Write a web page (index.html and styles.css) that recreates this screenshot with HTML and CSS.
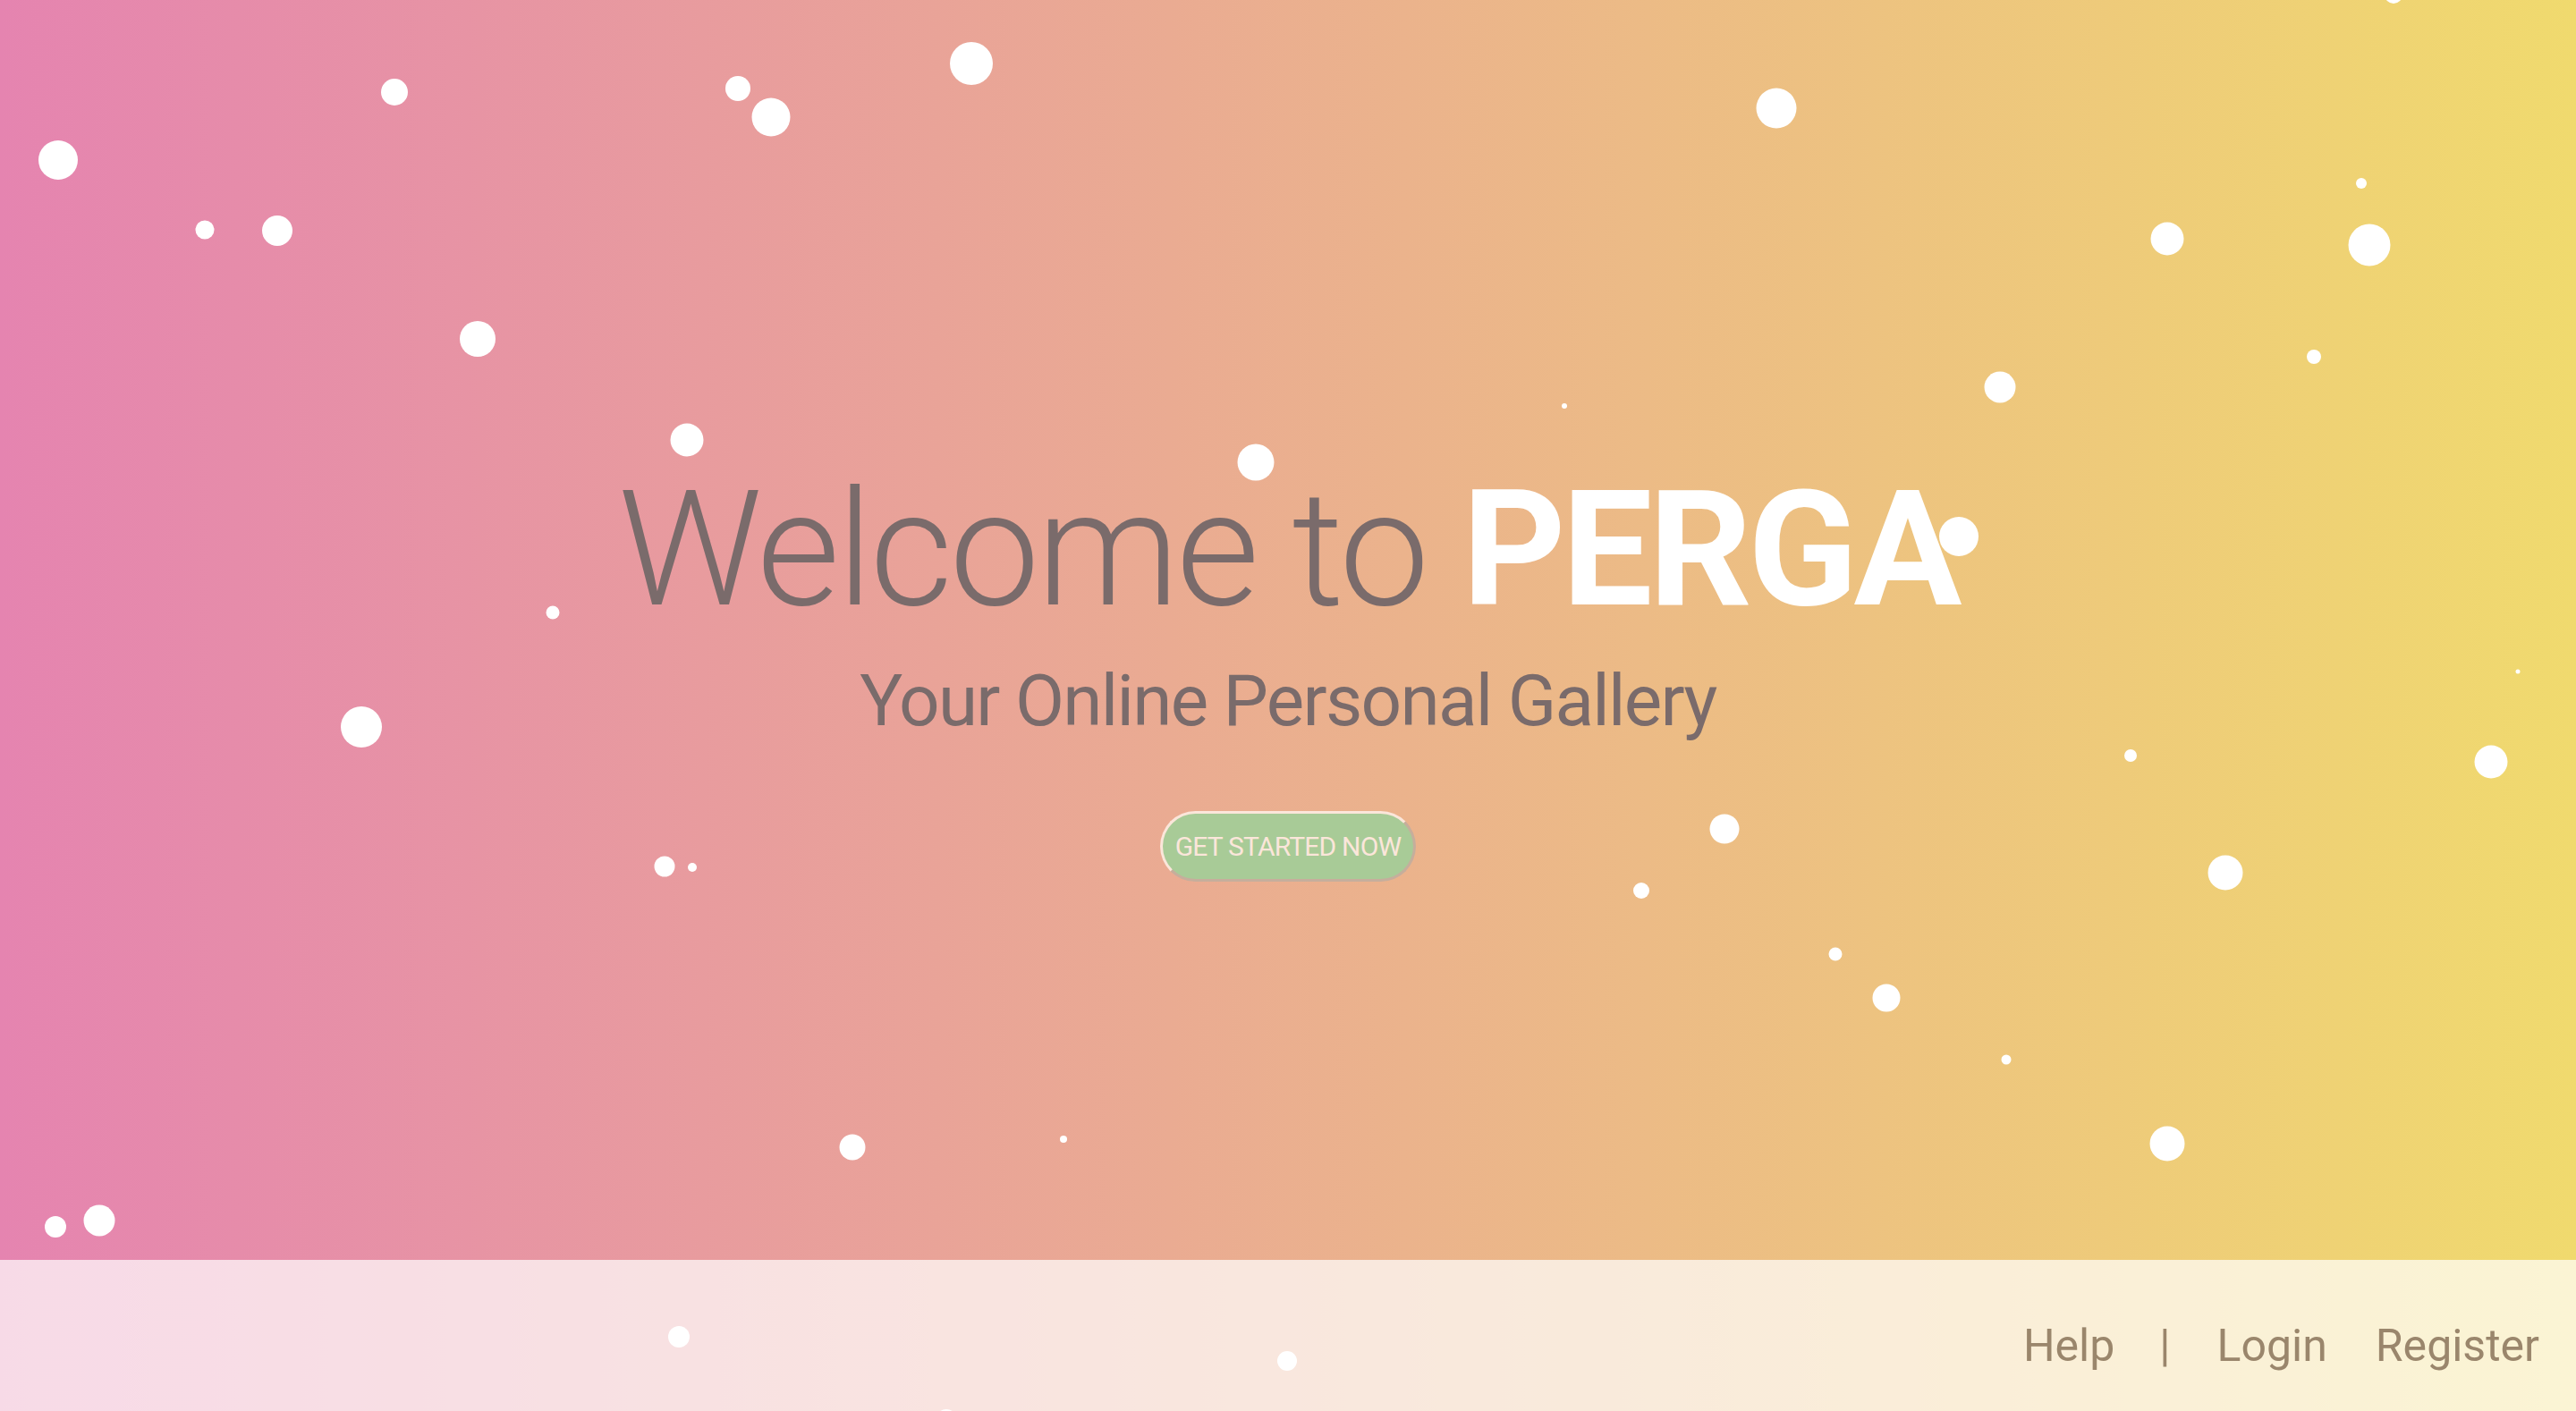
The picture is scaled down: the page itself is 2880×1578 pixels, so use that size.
FILE: index.html
```html
<!DOCTYPE html>
<html lang="en">
<head>
<meta charset="utf-8">
<title>PERGA</title>
<link rel="stylesheet" href="styles.css">
</head>
<body>
<div class="page">
  <main class="hero">
    <h1 class="title">Welcome to <strong>PERGA</strong></h1>
    <p class="subtitle">Your Online Personal Gallery</p>
    <a class="cta" href="#">GET STARTED NOW</a>
  </main>
  <footer class="footer">
    <nav class="footer-nav">
      <a class="help" href="#">Help</a>
      <span class="sep">|</span>
      <a class="login" href="#">Login</a>
      <a href="#">Register</a>
    </nav>
  </footer>
  <svg class="dots" viewBox="0 0 2880 1578" preserveAspectRatio="none" aria-hidden="true">
    <circle cx="65" cy="179" r="22"/>
    <circle cx="441" cy="103" r="15"/>
    <circle cx="229" cy="257" r="10.5"/>
    <circle cx="310" cy="258" r="17"/>
    <circle cx="534" cy="379" r="20"/>
    <circle cx="825" cy="99" r="14"/>
    <circle cx="862" cy="131" r="21.5"/>
    <circle cx="1086" cy="71" r="24"/>
    <circle cx="1986" cy="121" r="22.5"/>
    <circle cx="2676" cy="-6" r="10"/>
    <circle cx="2640" cy="205" r="6"/>
    <circle cx="2423" cy="267" r="18.5"/>
    <circle cx="2649" cy="274" r="23.5"/>
    <circle cx="2587" cy="399" r="8"/>
    <circle cx="2236" cy="433" r="17.5"/>
    <circle cx="1749" cy="454" r="3"/>
    <circle cx="768" cy="492" r="18.5"/>
    <circle cx="1404" cy="517" r="20.5"/>
    <circle cx="2190" cy="600" r="22"/>
    <circle cx="618" cy="685" r="7.5"/>
    <circle cx="404" cy="813" r="23"/>
    <circle cx="2815" cy="751" r="2.5"/>
    <circle cx="2785" cy="852" r="18.5"/>
    <circle cx="2382" cy="845" r="7"/>
    <circle cx="1928" cy="927" r="16.5"/>
    <circle cx="2488" cy="976" r="19.5"/>
    <circle cx="743" cy="969" r="11.5"/>
    <circle cx="774" cy="970" r="5"/>
    <circle cx="1835" cy="996" r="9"/>
    <circle cx="2052" cy="1067" r="7.5"/>
    <circle cx="2109" cy="1116" r="15.5"/>
    <circle cx="2243" cy="1185" r="5.5"/>
    <circle cx="953" cy="1283" r="14.5"/>
    <circle cx="1189" cy="1274" r="4"/>
    <circle cx="2423" cy="1279" r="19.5"/>
    <circle cx="62" cy="1372" r="12"/>
    <circle cx="111" cy="1365" r="17.5"/>
    <circle cx="759" cy="1495" r="12"/>
    <circle cx="1439" cy="1522" r="11"/>
    <circle cx="1058" cy="1588" r="12"/>
  </svg>
</div>
</body>
</html>
```

FILE: styles.css
```css
html, body {
  margin: 0;
  padding: 0;
  height: 100%;
}

body {
  font-family: Roboto, "Liberation Sans", sans-serif;
}

.page {
  position: relative;
  height: 100vh;
  display: flex;
  flex-direction: column;
  overflow: hidden;
  background: linear-gradient(to right, #e584b0 0%, #f0da6e 100%);
}

.hero {
  flex: 1;
  display: flex;
  flex-direction: column;
  align-items: center;
  padding-top: 525px;
}

.title {
  margin: 0;
  font-size: 180px;
  font-weight: 300;
  line-height: 1;
  letter-spacing: -3.6px;
  color: #7a6b6b;
  white-space: nowrap;
}

.title strong {
  color: #ffffff;
  font-weight: 700;
  letter-spacing: -4.4px;
}

.subtitle {
  margin: 39px 0 0;
  font-size: 80px;
  line-height: 1;
  letter-spacing: -1.7px;
  color: #7a6b6b;
}

.cta {
  margin-top: 83px;
  display: inline-block;
  font-size: 30px;
  line-height: 1;
  letter-spacing: -0.8px;
  padding: 21.5px 14px;
  border: 3px solid;
  border-color: #fbe6da #c6ae9c #c6ae9c #fbe6da;
  border-radius: 999px;
  background: #a8cb97;
  color: #fbe6da;
  text-decoration: none;
}

.footer {
  height: 169px;
  box-sizing: border-box;
  padding: 23px 41px 0 0;
  display: flex;
  justify-content: flex-end;
  align-items: center;
  background: rgba(255, 255, 255, 0.7);
}

.footer-nav {
  display: flex;
  align-items: center;
  font-size: 50px;
  line-height: 1;
  color: #9a866c;
}

.footer-nav a {
  color: inherit;
  text-decoration: none;
}

.footer-nav .help {
  margin-right: 50px;
}

.footer-nav .sep {
  margin-right: 52px;
}

.footer-nav .login {
  margin-right: 54px;
}

.dots {
  position: absolute;
  inset: 0;
  width: 100%;
  height: 100%;
  fill: #ffffff;
  pointer-events: none;
}
```
